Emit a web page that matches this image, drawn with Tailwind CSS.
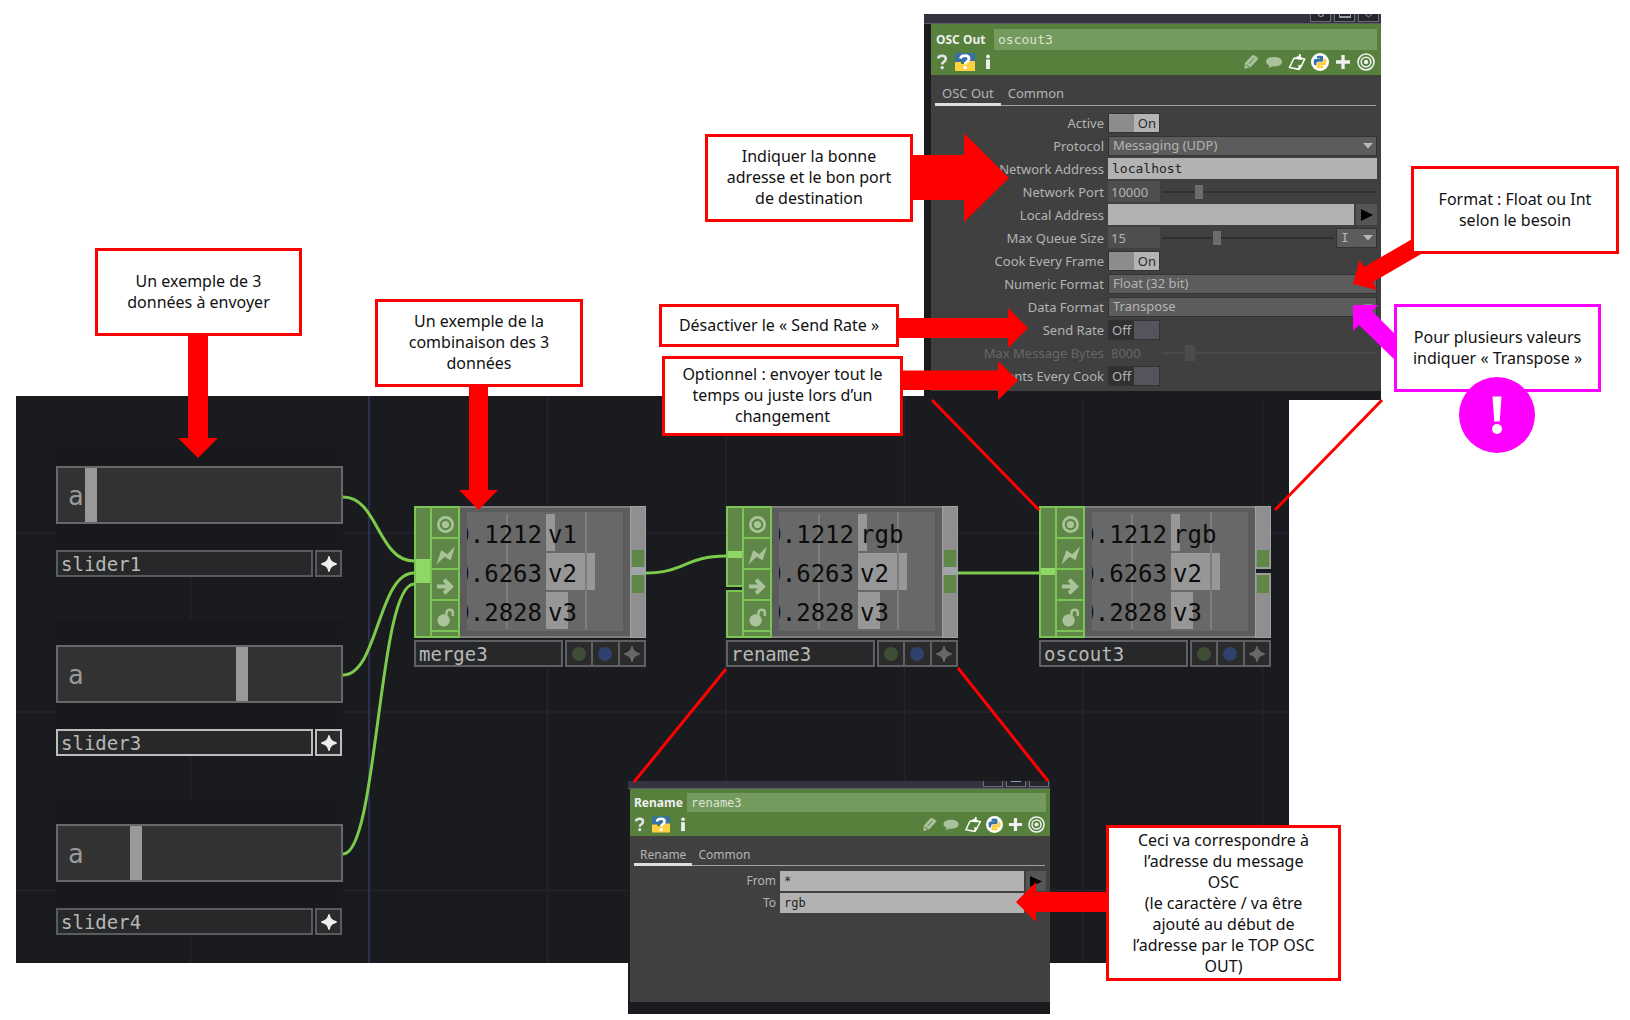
<!DOCTYPE html>
<html lang="fr">
<head>
<meta charset="utf-8">
<title>Envoi OSC</title>
<script src="https://cdn.jsdelivr.net/npm/@tailwindcss/browser@4"></script>
</head>
<body class="bg-white font-['Noto_Sans',sans-serif]">
<svg class="hidden" aria-hidden="true">
  <symbol id="py" viewBox="0 0 24 24"><path fill="#3672a5" d="M14.25.18l.9.2.73.26.59.3.45.32.34.34.25.34.16.33.1.3.04.26.02.2-.01.13V8.5l-.05.63-.13.55-.21.46-.26.38-.3.31-.33.25-.35.19-.35.14-.33.1-.3.07-.26.04-.21.02H8.77l-.69.05-.59.14-.5.22-.41.27-.33.32-.27.35-.2.36-.15.37-.1.35-.07.32-.04.27-.02.21v3.06H3.17l-.21-.03-.28-.07-.32-.12-.35-.18-.36-.26-.36-.36-.35-.46-.32-.59-.28-.73-.21-.88-.14-1.05-.05-1.23.06-1.22.16-1.04.24-.87.32-.71.36-.57.4-.44.42-.33.42-.24.4-.16.36-.1.32-.05.24-.01h.16l.06.01h8.16v-.83H6.18l-.01-2.75-.02-.37.05-.34.11-.31.17-.28.25-.26.31-.23.38-.2.44-.18.51-.15.58-.12.64-.1.71-.06.77-.04.84-.02 1.27.05z"/><path fill="#ffd040" transform="rotate(180 12 12)" d="M14.25.18l.9.2.73.26.59.3.45.32.34.34.25.34.16.33.1.3.04.26.02.2-.01.13V8.5l-.05.63-.13.55-.21.46-.26.38-.3.31-.33.25-.35.19-.35.14-.33.1-.3.07-.26.04-.21.02H8.77l-.69.05-.59.14-.5.22-.41.27-.33.32-.27.35-.2.36-.15.37-.1.35-.07.32-.04.27-.02.21v3.06H3.17l-.21-.03-.28-.07-.32-.12-.35-.18-.36-.26-.36-.36-.35-.46-.32-.59-.28-.73-.21-.88-.14-1.05-.05-1.23.06-1.22.16-1.04.24-.87.32-.71.36-.57.4-.44.42-.33.42-.24.4-.16.36-.1.32-.05.24-.01h.16l.06.01h8.16v-.83H6.18l-.01-2.75-.02-.37.05-.34.11-.31.17-.28.25-.26.31-.23.38-.2.44-.18.51-.15.58-.12.64-.1.71-.06.77-.04.84-.02 1.27.05z"/></symbol>
  <symbol id="i-help" viewBox="0 0 18 18"><path d="M5 5.600Q5.500 2.800 9 2.800Q12.800 2.800 12.800 6Q12.800 7.700 10.800 8.900Q9.200 9.800 9.200 11.500" fill="none" stroke="#e4e4e4" stroke-width="2.600"/><circle cx="9.200" cy="14.600" r="1.700" fill="#e4e4e4"/></symbol>
  <symbol id="i-pyhelp" viewBox="0 0 20 18"><path fill="#3672a5" d="M0 0h20v9H0z"/><path fill="#ffd040" d="M0 10q0-1 1-1h5v2h3l4-3h7v10H0z"/><path d="M5.500 5.600Q6 2.600 10 2.600Q14 2.600 14 5.800Q14 7.500 11.800 8.900Q10.200 9.800 10.200 11.300" fill="none" stroke="#fff" stroke-width="2.800"/><circle cx="10.200" cy="14.600" r="1.800" fill="#fff"/></symbol>
  <symbol id="i-info" viewBox="0 0 6 18"><circle cx="3" cy="3.500" r="1.900" fill="#eee"/><path fill="#eee" d="M1 6.500h4V16H1z"/></symbol>
  <symbol id="i-pen" viewBox="0 0 18 18"><path fill="#abc09d" d="M2.500 16l.5-6L10 2.500q1-1 2.200-.3l3.300 2.300q1 1 0 2.200L8.800 14z"/><path stroke="#56803c" d="M4 11.500l3.500 2.800M7 11l5-6" fill="none"/></symbol>
  <symbol id="i-bubble" viewBox="0 0 18 18"><path fill="#abc09d" d="M9 4c4.800 0 8 1.900 8 4.700s-3.200 4.700-8 4.700q-1 0-2-.2Q5.500 15 3 15q1.500-1.200 1.300-2.600Q1 11 1 8.700C1 5.900 4.200 4 9 4z"/></symbol>
  <symbol id="i-clip" viewBox="0 0 18 18"><path d="M6 5L1.500 14.500l9.500 1.800 2-2.800 3.700-7.500-3-.5M6 5l2 .3M11 16l.3-3.300 2.200.5" fill="none" stroke="#fff" stroke-width="1.500"/><path fill="#fff" d="M7 6L9 3.200l1.500.2L11.200 1l1.800.4-.3 2.300 1.800 1-1 2.300z"/></symbol>
  <symbol id="i-py" viewBox="0 0 18 18"><circle cx="9" cy="9" r="9" fill="#fff"/><use href="#py" x="2.500" y="2.500" width="13" height="13"/></symbol>
  <symbol id="i-plus" viewBox="0 0 18 18"><path d="M9 2v14M2 9h14" stroke="#f0f0f0" stroke-width="3.400"/></symbol>
  <symbol id="i-target" viewBox="0 0 18 18"><g fill="none" stroke="#f0f0f0" stroke-width="1.600"><circle cx="9" cy="9" r="8"/><circle cx="9" cy="9" r="4.800"/></g><circle cx="9" cy="9" r="2.200" fill="#f0f0f0"/></symbol>
  <symbol id="i-star" viewBox="0 0 18 18"><path d="M9 .5Q9.800 7.500 17.500 9Q9.800 10.500 9 17.500Q8.200 10.500 .5 9Q8.200 7.500 9 .5z" fill="currentColor" stroke="currentColor" stroke-width="1.600"/></symbol>
  <symbol id="i-view" viewBox="0 0 20 20"><circle cx="10" cy="10" r="7.500" fill="none" stroke="#aac39b" stroke-width="2.800"/><circle cx="10" cy="10" r="3.800" fill="#aac39b"/></symbol>
  <symbol id="i-bolt" viewBox="0 0 20 20"><path fill="#aac39b" d="M.4 19.600L5.600 4.600 11.800 8.600 20 .6 15.400 15 9 11.400z"/></symbol>
  <symbol id="i-arrow" viewBox="0 0 20 20"><path fill="none" stroke="#aac39b" stroke-width="4.400" d="M1 10H15M8.500 3L15.700 10l-7.200 7"/></symbol>
  <symbol id="i-lock" viewBox="0 0 20 20"><circle cx="8" cy="13" r="6.500" fill="#aac39b"/><path d="M11 8V5q.3-3.200 3.500-3.200t3.200 3.200v3.500" fill="none" stroke="#aac39b" stroke-width="2.600"/></symbol>
  <symbol id="i-caret" viewBox="0 0 10 6"><path d="M0 0h10L5 5.500z" fill="#b8b8b8"/></symbol>
</svg>

<main class="relative min-h-[1020px] w-full overflow-hidden">
  <!-- network editor -->
  <section aria-label="Réseau" class="absolute left-4 top-[396px] h-[567px] w-[1273px] overflow-hidden bg-[#1a1b1f]">
    <svg class="block size-full" viewBox="16 396 1273 567" fill="none">
      <path stroke="#23242f" stroke-width="1.500" d="M190.500 396V963M547.500 396V963M726 396V963M904.500 396V963M1083 396V963M1262.500 396V963M16 533H1289M16 712H1289M16 890.500H1289"/>
      <path stroke="#2d3050" stroke-width="2" d="M369 396V963"/>
    </svg>
  </section>
  <div id="nodes"></div>
  <svg class="pointer-events-none absolute left-0 top-0" width="1630" height="1020" viewBox="0 0 1630 1020" fill="none" stroke="#7ccb4b" stroke-width="3">
    <path d="M343 497C378 497 378 561 414 561M343 675C378 675 378 573 414 573M343 854C378 854 378 584 414 584M645 573C685 573 685 556 726 556M958 573H1039"/>
  </svg>

  <!-- OSC Out parameters -->
  <section class="absolute left-[924px] top-[14px] flex h-[386px] w-[457px] flex-col bg-[#1a1b1f] text-[13px] leading-5 text-[#b4b4b4]">
    <div class="flex h-[10px] items-start justify-end gap-[3px] border-b border-[#5c5d62] bg-[#33343f] pr-[2px]">
      <button aria-label="Aide" class="flex h-2 w-[21px] justify-center border border-t-0 border-[#6b6c74] bg-[#24252d]"><span class="h-[3px] w-1.5 rounded-b-full border border-t-0 border-[#9a9bb0]"></span></button>
      <button aria-label="Agrandir" class="flex h-2 w-[21px] justify-center border border-t-0 border-[#6b6c74] bg-[#24252d]"><span class="h-1 w-3 border border-t-0 border-b-2 border-[#9a9bb0]"></span></button>
      <button aria-label="Fermer" class="flex h-2 w-[21px] justify-center border border-t-0 border-[#6b6c74] bg-[#24252d]"><svg width="7" height="4"><path d="M0 0l3.500 3L7 0" fill="none" stroke="#9a9bb0"/></svg></button>
    </div>
    <div class="ml-[7px] flex h-[367px] flex-col bg-[#404040]">
      <header class="h-[51px] bg-[#56803c] pl-[5px] pr-1 pt-[5px]">
        <div class="flex h-[21px] items-center">
          <label for="oscname" class="w-[58px] text-[12px] font-bold text-[#eee]">OSC Out</label>
          <input id="oscname" value="oscout3" class="h-[21px] min-w-0 flex-1 bg-[#759a5d] px-1 font-['DejaVu_Sans_Mono',monospace] text-[13px] text-[#dbe5d4]">
        </div>
        <div class="mt-[3px] flex items-center">
          <button aria-label="Aide"><svg width="13" height="18"><use href="#i-help" x="-3" width="18" height="18"/></svg></button>
          <button aria-label="Aide Python" class="ml-1.5"><svg width="20" height="18"><use href="#i-pyhelp"/></svg></button>
          <button aria-label="Info" class="ml-2.5"><svg width="6" height="18"><use href="#i-info"/></svg></button>
          <div class="ml-auto flex gap-[5px] pr-[2px]">
            <button aria-label="Éditer"><svg width="18" height="18"><use href="#i-pen"/></svg></button>
            <button aria-label="Commentaire"><svg width="18" height="18"><use href="#i-bubble"/></svg></button>
            <button aria-label="Copier"><svg width="18" height="18"><use href="#i-clip"/></svg></button>
            <button aria-label="Python"><svg width="18" height="18"><use href="#i-py"/></svg></button>
            <button aria-label="Ajouter"><svg width="18" height="18"><use href="#i-plus"/></svg></button>
            <button aria-label="Cible"><svg width="18" height="18"><use href="#i-target"/></svg></button>
          </div>
        </div>
      </header>
      <nav class="ml-1 mr-[5px] mt-[7px] flex h-6 border-b border-[#a0a0a0]">
        <button class="h-6 border-b-[3px] border-[#ddd] px-[7px] pt-px">OSC Out</button>
        <button class="px-[7px] pb-px">Common</button>
      </nav>
      <form class="mt-[6px] flex flex-col gap-0.5 pr-1">
        <div class="flex h-[21px] items-center"><label for="f1" class="w-[173px] text-right">Active</label><span class="relative ml-1 flex"><input id="f1" type="checkbox" checked class="h-[20px] w-[52px] appearance-none border border-[#333] bg-linear-to-r from-[#8c8c8c] from-50% to-[#b4b4b4] to-50%"><span class="pointer-events-none absolute right-1 text-[#2b2b2b]">On</span></span></div>
        <div class="flex h-[21px] items-center"><label for="f2" class="w-[173px] text-right">Protocol</label><span class="relative ml-1 flex flex-1 items-center"><select id="f2" class="h-[20px] w-full appearance-none border border-[#333] bg-[#5c5c5c] px-1 pb-0.5 leading-4"><option>Messaging (UDP)</option></select><svg class="pointer-events-none absolute right-1" width="10" height="6"><use href="#i-caret"/></svg></span></div>
        <div class="flex h-[21px] items-center"><label for="f3" class="w-[173px] text-right">Network Address</label><input id="f3" value="localhost" class="ml-1 h-[21px] min-w-0 flex-1 bg-[#b2b2b2] px-1 font-['DejaVu_Sans_Mono',monospace] text-[13px] text-[#222]"></div>
        <div class="flex h-[21px] items-center"><label for="f4" class="w-[173px] text-right">Network Port</label><input id="f4" value="10000" class="ml-1 h-[21px] w-[52px] bg-[#4e4e4e] px-[3px]"><input aria-label="Network Port" type="range" value="16" class="ml-0.5 h-4 min-w-0 flex-1 appearance-none bg-transparent [&::-webkit-slider-runnable-track]:h-0.5 [&::-webkit-slider-runnable-track]:bg-[#303030] [&::-webkit-slider-thumb]:-mt-1.5 [&::-webkit-slider-thumb]:h-3.5 [&::-webkit-slider-thumb]:w-2 [&::-webkit-slider-thumb]:appearance-none [&::-webkit-slider-thumb]:bg-[#6c6c6c]"></div>
        <div class="flex h-[21px] items-center"><label for="f5" class="w-[173px] text-right">Local Address</label><input id="f5" class="ml-1 h-[21px] min-w-0 flex-1 bg-[#b2b2b2] px-1"><button type="button" aria-label="Choisir" class="ml-0.5 flex h-[21px] w-[21px] items-center justify-center bg-[#555]"><svg width="12" height="12"><path d="M0 0l12 6-12 6z"/></svg></button></div>
        <div class="flex h-[21px] items-center"><label for="f6" class="w-[173px] text-right">Max Queue Size</label><input id="f6" value="15" class="ml-1 h-[21px] w-[52px] bg-[#4e4e4e] px-[3px]"><input aria-label="Max Queue Size" type="range" value="31" class="ml-0.5 h-4 min-w-0 flex-1 appearance-none bg-transparent [&::-webkit-slider-runnable-track]:h-0.5 [&::-webkit-slider-runnable-track]:bg-[#303030] [&::-webkit-slider-thumb]:-mt-1.5 [&::-webkit-slider-thumb]:h-3.5 [&::-webkit-slider-thumb]:w-2 [&::-webkit-slider-thumb]:appearance-none [&::-webkit-slider-thumb]:bg-[#6c6c6c]"><span class="relative ml-0.5 flex items-center"><select aria-label="Unité" class="h-[20px] w-[41px] appearance-none border border-[#333] bg-[#5c5c5c] px-1 font-['DejaVu_Sans_Mono',monospace] leading-4"><option>I</option></select><svg class="pointer-events-none absolute right-1" width="10" height="6"><use href="#i-caret"/></svg></span></div>
        <div class="flex h-[21px] items-center"><label for="f7" class="w-[173px] text-right">Cook Every Frame</label><span class="relative ml-1 flex"><input id="f7" type="checkbox" checked class="h-[20px] w-[52px] appearance-none border border-[#333] bg-linear-to-r from-[#8c8c8c] from-50% to-[#b4b4b4] to-50%"><span class="pointer-events-none absolute right-1 text-[#2b2b2b]">On</span></span></div>
        <div class="flex h-[21px] items-center"><label for="f8" class="w-[173px] text-right">Numeric Format</label><span class="relative ml-1 flex flex-1 items-center"><select id="f8" class="h-[20px] w-full appearance-none border border-[#333] bg-[#5c5c5c] px-1 pb-0.5 leading-4"><option>Float (32 bit)</option></select></span></div>
        <div class="flex h-[21px] items-center"><label for="f9" class="w-[173px] text-right">Data Format</label><span class="relative ml-1 flex flex-1 items-center"><select id="f9" class="h-[20px] w-full appearance-none border border-[#333] bg-[#5c5c5c] px-1 pb-0.5 leading-4"><option>Transpose</option></select><svg class="pointer-events-none absolute right-1 opacity-50" width="10" height="6"><use href="#i-caret"/></svg></span></div>
        <div class="flex h-[21px] items-center"><label for="f10" class="w-[173px] text-right">Send Rate</label><span class="relative ml-1 flex"><input id="f10" type="checkbox" class="h-[20px] w-[52px] appearance-none border border-[#333] bg-linear-to-r from-[#303030] from-50% to-[#54545c] to-50%"><span class="pointer-events-none absolute left-1">Off</span></span></div>
        <div class="flex h-[21px] items-center text-[#666]"><label for="f11" class="w-[173px] text-right">Max Message Bytes</label><input id="f11" value="8000" disabled class="ml-1 h-[21px] w-[52px] px-[3px]"><input aria-label="Max Message Bytes" disabled type="range" value="11" class="ml-0.5 h-4 min-w-0 flex-1 appearance-none bg-transparent [&::-webkit-slider-runnable-track]:h-0.5 [&::-webkit-slider-runnable-track]:bg-[#4a4a4a] [&::-webkit-slider-thumb]:-mt-[7px] [&::-webkit-slider-thumb]:h-4 [&::-webkit-slider-thumb]:w-2.5 [&::-webkit-slider-thumb]:appearance-none [&::-webkit-slider-thumb]:bg-[#4c4c4c]"></div>
        <div class="flex h-[21px] items-center"><label for="f12" class="w-[173px] whitespace-nowrap text-right">Send Events Every Cook</label><span class="relative ml-1 flex"><input id="f12" type="checkbox" class="h-[20px] w-[52px] appearance-none border border-[#333] bg-linear-to-r from-[#303030] from-50% to-[#54545c] to-50%"><span class="pointer-events-none absolute left-1">Off</span></span></div>
      </form>
    </div>
  </section>

  <!-- Rename parameters -->
  <section class="absolute left-[628px] top-[781px] flex h-[233px] w-[422px] flex-col bg-[#1a1b1f] text-[12px] leading-5 text-[#b4b4b4]">
    <div class="flex h-2 items-start justify-end gap-[3px] border-b border-[#5c5d62] bg-[#33343f] pr-px">
      <button aria-label="Aide" class="h-[6px] w-[20px] border border-t-0 border-[#6b6c74] bg-[#24252d]"></button>
      <button aria-label="Agrandir" class="flex h-[6px] w-[20px] justify-center border border-t-0 border-[#6b6c74] bg-[#24252d]"><span class="h-px w-2.5 bg-[#9a9bb0]"></span></button>
      <button aria-label="Fermer" class="h-[6px] w-[20px] border border-t-0 border-[#6b6c74] bg-[#24252d]"></button>
    </div>
    <div class="ml-0.5 flex h-[213px] flex-col bg-[#404040]">
      <header class="h-[47px] bg-[#56803c] pl-1 pr-1 pt-1">
        <div class="flex h-[19px] items-center">
          <label for="rnname" class="w-[53px] text-[12px] font-bold text-[#eee]">Rename</label>
          <input id="rnname" value="rename3" class="h-[19px] min-w-0 flex-1 bg-[#759a5d] px-1 font-['DejaVu_Sans_Mono',monospace] text-[12px] text-[#dbe5d4]">
        </div>
        <div class="mt-1 flex items-center">
          <button aria-label="Aide"><svg width="12" height="17" viewBox="0 0 13 18"><use href="#i-help" x="-3" width="18" height="18"/></svg></button>
          <button aria-label="Aide Python" class="ml-1.5"><svg width="18" height="17"><use href="#i-pyhelp"/></svg></button>
          <button aria-label="Info" class="ml-2.5"><svg width="6" height="17"><use href="#i-info"/></svg></button>
          <div class="ml-auto flex gap-1 pr-px">
            <button aria-label="Éditer"><svg width="17" height="17"><use href="#i-pen"/></svg></button>
            <button aria-label="Commentaire"><svg width="18" height="17"><use href="#i-bubble"/></svg></button>
            <button aria-label="Copier"><svg width="18" height="17"><use href="#i-clip"/></svg></button>
            <button aria-label="Python"><svg width="17" height="17"><use href="#i-py"/></svg></button>
            <button aria-label="Ajouter"><svg width="17" height="17"><use href="#i-plus"/></svg></button>
            <button aria-label="Cible"><svg width="17" height="17"><use href="#i-target"/></svg></button>
          </div>
        </div>
      </header>
      <nav class="ml-1 mr-[5px] mt-2 flex h-[22px] border-b border-[#a0a0a0]">
        <button class="h-[22px] border-b-[3px] border-[#ddd] px-1.5 pt-px">Rename</button>
        <button class="px-1.5">Common</button>
      </nav>
      <form class="mt-[5px] flex flex-col gap-0.5 pr-1">
        <div class="flex h-5 items-center"><label for="r1" class="w-[146px] text-right">From</label><input id="r1" value="*" class="ml-1 h-5 min-w-0 flex-1 bg-[#b2b2b2] px-1 font-['DejaVu_Sans_Mono',monospace] text-[12px] text-[#222]"><button type="button" aria-label="Choisir" class="ml-0.5 flex h-5 w-5 items-center justify-center bg-[#555]"><svg width="12" height="11"><path d="M0 0l12 5.500L0 11z"/></svg></button></div>
        <div class="flex h-5 items-center pr-[22px]"><label for="r2" class="w-[146px] text-right">To</label><input id="r2" value="rgb" class="ml-1 h-5 min-w-0 flex-1 bg-[#b2b2b2] px-1 font-['DejaVu_Sans_Mono',monospace] text-[12px] text-[#222]"></div>
      </form>
    </div>
  </section>

  <!-- arrows and zoom lines -->
  <svg class="pointer-events-none absolute left-0 top-0" width="1630" height="1020" viewBox="0 0 1630 1020">
    <path fill="none" stroke="#f00" stroke-width="3" d="M932 400L1039 510M1382 400L1275 510M726 669L634 782M958 668L1048 781"/>
    <path fill="#f00" d="M188 334h20v104h10l-20 20-20-20h10zM469 385h19v105h10l-19.500 20-19.500-20h10zM911 155h53v-22l45 45-45 44v-22h-53zM897 318h111v-10l20 20-20 20v-10H897zM901 370.500h97V361l20 19.500L998 400v-10h-97zM1353 284l6.500-24 4.500 7 50-29 14 12-55 32 4 8zM1110 892h-74v-10l-20 20 20 20v-10h74z"/>
    <path fill="#f0f" d="M1353 305h25l-6 6 25 25v26l-38-37-6 6z"/>
  </svg>

  <!-- callouts -->
  <div class="text-center text-[16px] leading-[21px] text-[#111]">
    <p class="absolute left-[95px] top-[248px] flex h-[88px] w-[207px] items-center justify-center border-3 border-[#f00] bg-white pb-px">Un exemple de 3<br>données à envoyer</p>
    <p class="absolute left-[375px] top-[299px] flex h-[88px] w-[208px] items-center justify-center border-3 border-[#f00] bg-white pb-px">Un exemple de la<br>combinaison des 3<br>données</p>
    <p class="absolute left-[705px] top-[134px] flex h-[88px] w-[208px] items-center justify-center border-3 border-[#f00] bg-white pb-px">Indiquer la bonne<br>adresse et le bon port<br>de destination</p>
    <p class="absolute left-[659px] top-[304px] flex h-[43px] w-[240px] items-center justify-center border-3 border-[#f00] bg-white pb-px">Désactiver le « Send Rate »</p>
    <p class="absolute left-[662px] top-[356px] flex h-[80px] w-[241px] items-center justify-center border-3 border-[#f00] bg-white pb-px">Optionnel : envoyer tout le<br>temps ou juste lors d’un<br>changement</p>
    <p class="absolute left-[1411px] top-[166px] flex h-[88px] w-[208px] items-center justify-center border-3 border-[#f00] bg-white pb-px">Format : Float ou Int<br>selon le besoin</p>
    <p class="absolute left-[1394px] top-[304px] flex h-[88px] w-[207px] items-center justify-center border-3 border-[#f0f] bg-white pb-px">Pour plusieurs valeurs<br>indiquer « Transpose »</p>
    <p class="absolute left-[1106px] top-[825px] flex h-[156px] w-[235px] items-center justify-center border-3 border-[#f00] bg-white">Ceci va correspondre à<br>l’adresse du message<br>OSC<br>(le caractère / va être<br>ajouté au début de<br>l’adresse par le TOP OSC<br>OUT)</p>
  </div>
  <svg class="absolute left-[1459px] top-[377px]" width="76" height="76" role="img" aria-label="Attention"><circle cx="38" cy="38" r="38" fill="#f0f"/><path fill="#fff" d="M33.500 19.500h9l-1.800 25h-5.400z"/><circle cx="38" cy="52" r="5" fill="#fff"/></svg>
</main>

<script>
const sliders = [
  { name: 'slider1', pos: 'top-[441px]', value: 10, edge: 'border-[#5a5b5f]' },
  { name: 'slider3', pos: 'top-[620px]', value: 65.5, edge: 'border-[#bdbdbd]' },
  { name: 'slider4', pos: 'top-[799px]', value: 26.5, edge: 'border-[#5a5b5f]' },
];
const ops = [
  { name: 'merge3', pos: 'left-[414px]', first: 'v1', input: '<i class="mt-[51px] h-6 bg-[#8ed966]"></i>', gap: 'bg-[#a3a3aa]' },
  { name: 'rename3', pos: 'left-[726px]', first: 'rgb', input: '<i class="mt-[43px] h-[7px] bg-[#8ed966]"></i><i class="mt-[27px] -ml-0.5 h-[7px] border-y-2 border-[#7cc453] bg-[#1a1b1f]"></i>', gap: 'bg-[#a3a3aa]' },
  { name: 'oscout3', pos: 'left-[1039px]', first: 'rgb', input: '<i class="mt-[60px] h-[7px] bg-[#8ed966]"></i>', gap: 'bg-[#1a1b1f] border-y-2 border-[#9d9d9d] -mr-px' },
];
const sliderHtml = s => `
<section class="absolute left-14 ${s.pos} w-[287px] font-['DejaVu_Sans_Mono',monospace]">
  <div class="h-[109px] bg-[#18191c] pt-[25px]">
    <div class="relative flex h-[58px] border-2 border-[#67686a] bg-[#323232]">
      <label for="${s.name}" class="absolute left-2.5 top-3 text-[26px] leading-8 text-[#999]">a</label>
      <input id="${s.name}" type="range" step="0.1" value="${s.value}" class="relative h-[54px] w-full appearance-none bg-transparent [&::-webkit-slider-thumb]:h-[54px] [&::-webkit-slider-thumb]:w-3 [&::-webkit-slider-thumb]:appearance-none [&::-webkit-slider-thumb]:bg-[#999]">
    </div>
  </div>
  <div class="flex h-[27px] gap-0.5 pr-px">
    <h2 class="flex flex-1 items-center border-2 ${s.edge} bg-[#27282a] pl-[3px] text-[19px] leading-6 text-[#b8b8b8]">${s.name}</h2>
    <button aria-label="Activer" class="flex w-[27px] items-center justify-center border-2 ${s.edge} bg-[#2b2b2b] text-[#eee]"><svg width="16" height="16"><use href="#i-star"/></svg></button>
  </div>
</section>`;
const opHtml = n => `
<section class="absolute ${n.pos} top-[506px] w-[232px] font-['DejaVu_Sans_Mono',monospace]">
  <div class="flex h-[132px] bg-[#5c5c5c]">
    <div class="flex w-4 flex-col border-2 border-r-0 border-[#7cc453] bg-[#5f8848]">${n.input}</div>
    <div class="flex w-[30px] flex-col divide-y-2 divide-[#7cc453] border-2 border-[#7cc453] bg-[#5f8848]">
      <button aria-label="Viewer" class="flex h-[31px] shrink-0 items-center justify-center pt-1"><svg width="19" height="19"><use href="#i-view"/></svg></button>
      <button aria-label="Bypass" class="flex h-[31px] shrink-0 items-center justify-center pt-1"><svg width="19" height="19"><use href="#i-bolt"/></svg></button>
      <button aria-label="Export" class="flex h-[31px] shrink-0 items-center justify-center pt-1"><svg width="19" height="19"><use href="#i-arrow"/></svg></button>
      <button aria-label="Verrou" class="flex h-[31px] shrink-0 items-center justify-center pt-1"><svg width="19" height="19"><use href="#i-lock"/></svg></button>
      <span class="flex-1"></span>
    </div>
    <div class="flex-1 border-y-2 border-[#7d7d7d] px-[7px] py-1">
      <div class="relative flex h-[119px] flex-col justify-between bg-[#686868] py-0.5 text-[24px] leading-[42px] text-[#0c0c0c]">
        <i class="absolute bottom-0.5 left-[39px] top-0.5 w-0.5 bg-[#7d7d7d]"></i>
        ${[['0.1212', n.first, 9], ['0.6263', 'v2', 49], ['0.2828', 'v3', 22]].map(r => `
        <div class="relative flex h-[37px]">
          <span class="flex h-[42px] w-[75px] justify-end overflow-hidden">${r[0]}</span>
          <i class="absolute left-[79px] h-[37px] bg-[#979797]" style="width:${r[2]}px"></i>
          <i class="absolute -top-0.5 left-[118px] h-[40px] w-0.5 bg-[#7d7d7d]"></i>
          <span class="relative ml-[6px]">${r[1]}</span>
        </div>`).join('')}
      </div>
    </div>
    <div class="flex w-4 flex-col border border-[#a2a2a2] bg-[#8f8f8f] pt-[43px]">
      <i class="mx-px h-[17px] bg-[#5f8848]"></i><i class="h-2 ${n.gap}"></i><i class="mx-px h-[18px] bg-[#5f8848]"></i>
    </div>
  </div>
  <div class="mt-0.5 flex h-[27px] gap-0.5">
    <h2 class="flex w-[149px] items-center border-2 border-[#5f6063] bg-[#27282a] pl-[3px] text-[19px] leading-6 text-[#b8b8b8]">${n.name}</h2>
    <div class="flex flex-1 divide-x-2 divide-[#5f6063] border-2 border-[#5f6063] bg-[#2b2b2b]">
      <button aria-label="Affichage" class="flex flex-1 items-center justify-center"><i class="size-3.5 rounded-full bg-[#3f4d36]"></i></button>
      <button aria-label="Rendu" class="flex flex-1 items-center justify-center"><i class="size-3.5 rounded-full bg-[#2f426b]"></i></button>
      <button aria-label="Activer" class="flex flex-1 items-center justify-center text-[#686868]"><svg width="16" height="16"><use href="#i-star"/></svg></button>
    </div>
  </div>
</section>`;
document.getElementById('nodes').innerHTML = sliders.map(sliderHtml).join('') + ops.map(opHtml).join('');
</script>
</body>
</html>
